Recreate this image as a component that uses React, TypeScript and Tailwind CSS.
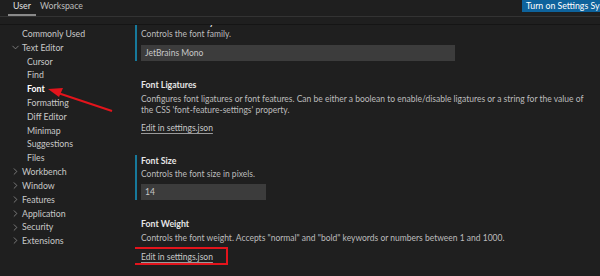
import { ChevronRight, ChevronDown } from 'lucide-react';

const subItems = ['Cursor', 'Find', 'Font', 'Formatting', 'Diff Editor', 'Minimap', 'Suggestions', 'Files'];
const groups = ['Workbench', 'Window', 'Features', 'Application', 'Security', 'Extensions'];

function EditLink() {
  return (
    <span className="underline decoration-[#9a9a9a] underline-offset-2 text-[#c8c8c8]">
      Edit in settings.json
    </span>
  );
}

export default function App() {
  return (
    <div
      className="relative w-[600px] h-[276px] overflow-hidden bg-[#1f1f1f] text-[8.5px] text-[#c8c8c8]"
      style={{ fontFamily: 'Lato, "Noto Sans", sans-serif' }}
    >
      {/* Header */}
      <div className="h-[25px] border-b border-[#151515]">
        <div className="flex h-[17px] items-start justify-between border-b border-[#333]">
          <div className="flex text-[8.75px]">
            <div className="ml-[8px] w-[28px] h-[16px] border-b-2 border-[#8a8a8a] flex justify-center leading-[12px] text-[#e0e0e0]">
              User
            </div>
            <div className="ml-[4px] leading-[12px] text-[#bdbdbd]">Workspace</div>
          </div>
          <div className="h-[12px] w-[78px] bg-[#0e639c] pl-[4px] text-[8.75px] leading-[12px] text-white whitespace-nowrap overflow-hidden">
            Turn on Settings Sync
          </div>
        </div>
      </div>

      <div className="flex h-[251px]">
        {/* Sidebar */}
        <div className="w-[135px] shrink-0 pt-[2px] text-[8.75px]">
          <div className="h-[13.8px] leading-[13.8px] pl-[22px]">Commonly Used</div>
          <div className="h-[13.8px] flex items-center pl-[10px] gap-[1px]">
            <ChevronDown className="w-[11px] h-[11px] text-[#a0a0a0]" strokeWidth={1.5} />
            <span>Text Editor</span>
          </div>
          {subItems.map((item) => (
            <div
              key={item}
              className={
                item === 'Font'
                  ? 'h-[13.8px] leading-[13.8px] pl-[27px] font-bold text-white'
                  : 'h-[13.8px] leading-[13.8px] pl-[27px]'
              }
            >
              {item}
            </div>
          ))}
          {groups.map((g) => (
            <div key={g} className="h-[13.8px] flex items-center pl-[10px] gap-[1px]">
              <ChevronRight className="w-[11px] h-[11px] text-[#a0a0a0]" strokeWidth={1.5} />
              <span>{g}</span>
            </div>
          ))}
        </div>

        {/* Content */}
        <div className="flex-1 overflow-hidden">
          <div className="-mt-[9px] text-[#bcbcbc]">
            {/* Font Family */}
            <div className="border-l-2 border-[#17799b] pl-[4px]">
              <div className="leading-[12px] text-[8.75px] font-bold text-[#e6e6e6]">Editor: Font Family</div>
              <div className="leading-[12px]">Controls the font family.</div>
              <div className="mt-[5px] h-[16px] w-[314px] bg-[#3c3c3c] pl-[4px] leading-[16px] text-[#c8c8c8]">
                JetBrains Mono
              </div>
            </div>

            {/* Font Ligatures */}
            <div className="mt-[18px] border-l-2 border-transparent pl-[4px]">
              <div className="leading-[12px] text-[8.75px] font-bold text-[#e6e6e6]">Font Ligatures</div>
              <div className="mt-[3px] leading-[11px] pr-[8px]">
                Configures font ligatures or font features. Can be either a boolean to enable/disable ligatures or a string for the value of the CSS 'font-feature-settings' property.
              </div>
              <div className="mt-[6px] leading-[12px]">
                <EditLink />
              </div>
            </div>

            {/* Font Size */}
            <div className="mt-[21px] border-l-2 border-[#17799b] pl-[4px]">
              <div className="leading-[12px] text-[8.75px] font-bold text-[#e6e6e6]">Font Size</div>
              <div className="mt-[1px] leading-[12px]">Controls the font size in pixels.</div>
              <div className="mt-[4px] h-[16px] w-[125px] bg-[#3c3c3c] pl-[4px] leading-[16px] text-[#c8c8c8]">
                14
              </div>
            </div>

            {/* Font Weight */}
            <div className="mt-[18px] border-l-2 border-transparent pl-[4px]">
              <div className="leading-[12px] text-[8.75px] font-bold text-[#e6e6e6]">Font Weight</div>
              <div className="mt-[2px] leading-[12px]">
                Controls the font weight. Accepts "normal" and "bold" keywords or numbers between 1 and 1000.
              </div>
              <div className="relative mt-[7px] leading-[12px]">
                <EditLink />
                <div className="absolute -left-[14px] -top-[4px] w-[101px] h-[18px] border-2 border-[#e3141c]" />
              </div>
            </div>
          </div>
        </div>
      </div>

      {/* Annotation arrow */}
      <svg className="absolute left-0 top-0 pointer-events-none" width="600" height="276">
        <line x1="112" y1="111" x2="58" y2="93" stroke="#e3141c" strokeWidth="2" />
        <polygon points="48,89 63,88 59,97" fill="#e3141c" />
      </svg>
    </div>
  );
}
